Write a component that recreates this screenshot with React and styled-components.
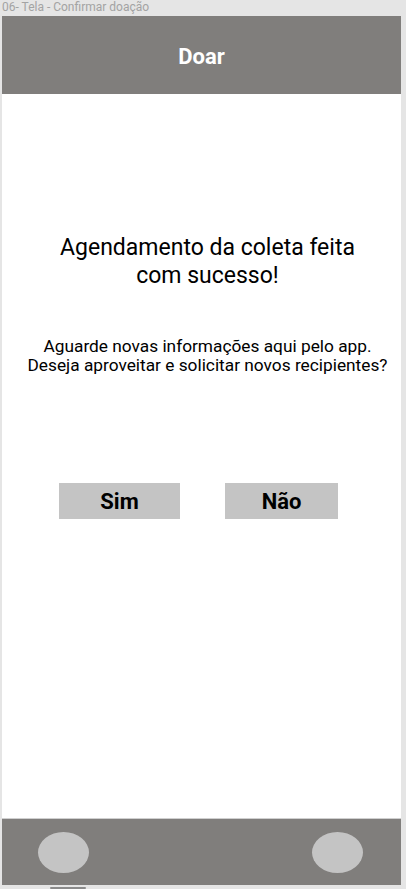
import React from 'react';
import styled, { createGlobalStyle } from 'styled-components';

const Global = createGlobalStyle`
    html, body {
        margin: 0;
        padding: 0;
        background: #e5e5e5;
        font-family: Roboto, "Liberation Sans", sans-serif;
    }
`

const Page = styled.div`
    width: 406px;
    height: 889px;
    background: #e5e5e5;
    display: flex;
    flex-direction: column;
    overflow: hidden;
`

const Label = styled.div`
    height: 16px;
    padding-left: 2px;
    font-size: 12px;
    line-height: 14px;
    color: #a3a3a3;
`

const Frame = styled.div`
    width: 399px;
    margin-left: 2px;
    height: 869px;
    display: flex;
    flex-direction: column;
    background: #fff;
`

const Header = styled.div`
    height: 78px;
    box-sizing: border-box;
    padding-top: 3px;
    background: #807e7c;
    display: flex;
    align-items: center;
    justify-content: center;
    color: #fff;
    font-size: 22px;
    font-weight: 700;
`

const Content = styled.div`
    flex: 1;
    display: flex;
    flex-direction: column;
    align-items: center;
    padding: 140px 0 0 12px;
    text-align: center;
    color: #000;
`

const Title = styled.h1`
    margin: 0;
    font-size: 23px;
    font-weight: 400;
    line-height: 28px;
`

const Message = styled.p`
    margin: 47px 0 0;
    font-size: 17.3px;
    line-height: 19px;
`

const Buttons = styled.div`
    display: flex;
    margin-top: 108px;
    margin-left: -18px;
    gap: 45px;
`

const Choice = styled.button`
    width: ${p => p.w}px;
    height: 36px;
    border: none;
    background: #c4c4c4;
    font-family: Roboto, "Liberation Sans", sans-serif;
    font-size: 22px;
    font-weight: 700;
    color: #000;
    padding: 0;
`

const Footer = styled.div`
    height: 66px;
    border-top: 1px solid #cfcfcf;
    background: #807e7c;
    display: flex;
    align-items: center;
    justify-content: space-between;
    padding: 0 38px 0 36px;
`

const NavDot = styled.div`
    width: 51px;
    height: 41px;
    border-radius: 50%;
    background: #c4c4c4;
`

const Bottom = styled.div`
    flex: 1;
    position: relative;
`

const ScrollThumb = styled.div`
    position: absolute;
    left: 50px;
    bottom: 0;
    width: 36px;
    height: 2px;
    border-radius: 1px;
    background: #8a8a8a;
`

export default function App() {
    return (
        <Page>
            <Global />
            <Label>06- Tela - Confirmar doação</Label>
            <Frame>
                <Header>Doar</Header>
                <Content>
                    <Title>Agendamento da coleta feita<br />com sucesso!</Title>
                    <Message>
                        Aguarde novas informações aqui pelo app.<br />
                        Deseja aproveitar e solicitar novos recipientes?
                    </Message>
                    <Buttons>
                        <Choice w={121}>Sim</Choice>
                        <Choice w={113}>Não</Choice>
                    </Buttons>
                </Content>
                <Footer>
                    <NavDot />
                    <NavDot />
                </Footer>
            </Frame>
            <Bottom>
                <ScrollThumb />
            </Bottom>
        </Page>
    )
}
